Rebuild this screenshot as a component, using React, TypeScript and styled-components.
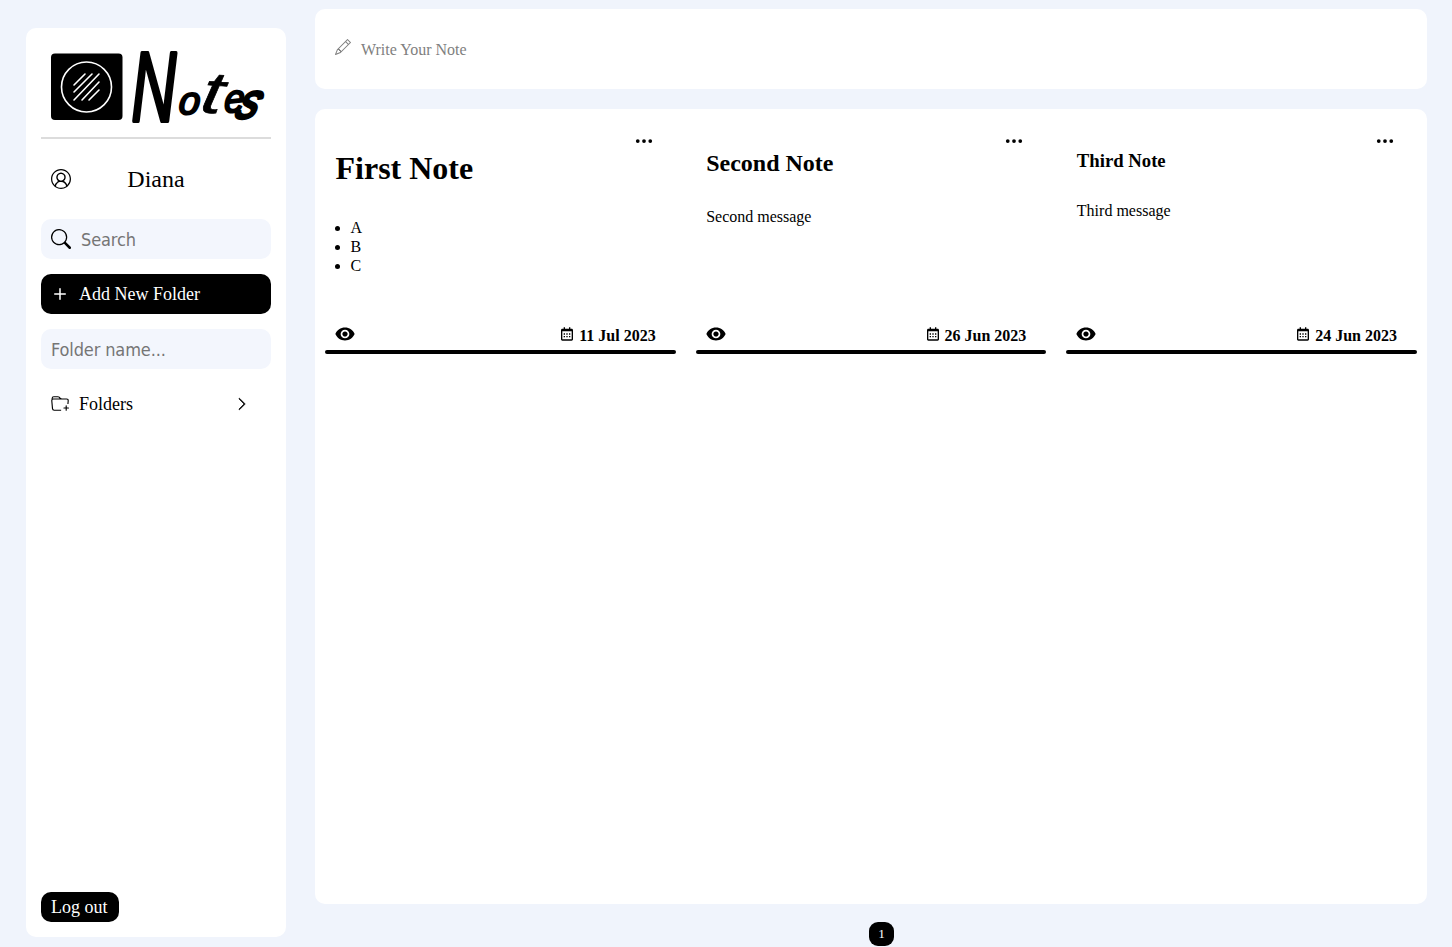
import React from 'react';
import styled, { createGlobalStyle } from 'styled-components';
import { BsSearch, BsPlus, BsFolderPlus, BsChevronRight, BsPencil, BsThreeDots } from 'react-icons/bs';
import { VscAccount } from 'react-icons/vsc';
import { IoMdEye } from 'react-icons/io';
import { BiCalendar } from 'react-icons/bi';

const GlobalStyle = createGlobalStyle`
  * { box-sizing: border-box; }
  body {
    margin: 0;
    background: #f0f4fc;
    color: #000;
    font-family: 'Liberation Serif', serif;
    font-size: 16px;
  }
  svg { flex: none; }
`;

const Page = styled.div`
  display: flex;
  gap: 29px;
  height: 947px;
  padding: 0 25px 0 26px;
  overflow: hidden;
`;

const Sidebar = styled.aside`
  display: flex;
  flex-direction: column;
  gap: 15px;
  width: 260px;
  height: 909px;
  margin-top: 28px;
  padding: 0 15px 15px;
  border-radius: 10px;
  background: #fff;
`;

const LogoBox = styled.div`
  height: 111px;
  padding: 20px 0 0 6px;
  border-bottom: 2px solid #dcdcdc;
  svg { overflow: visible; }
`;

const User = styled.div`
  display: flex;
  align-items: center;
  height: 50px;
  padding: 0 10px;
  font-size: 24px;
`;

const UserName = styled.span`
  flex: 1;
  padding-right: 20px;
  text-align: center;
`;

const Field = styled.label`
  display: flex;
  align-items: center;
  gap: 10px;
  height: 40px;
  padding: 0 10px;
  border-radius: 10px;
  background: #f3f6fd;
`;

const Input = styled.input`
  flex: 1;
  min-width: 0;
  padding: 0;
  border: 0;
  outline: 0;
  background: transparent;
  font: 18px 'DejaVu Sans Condensed', 'Noto Sans', sans-serif;
  letter-spacing: -0.13px;
  &::placeholder { color: #757575; opacity: 1; }
`;

const MenuButton = styled.button<{ $dark?: boolean }>`
  display: flex;
  align-items: center;
  gap: 10px;
  height: 40px;
  padding: 0 ${p => (p.$dark ? 10 : 22)}px 0 10px;
  border: 0;
  border-radius: 10px;
  background: ${p => (p.$dark ? '#000' : 'transparent')};
  color: ${p => (p.$dark ? '#fff' : '#000')};
  font: 18px 'Liberation Serif', serif;
`;

const PlusIcon = styled(BsPlus)`
  margin: 0 -3px;
`;

const Chevron = styled(BsChevronRight)`
  stroke: currentColor;
  stroke-width: 0.8;
`;

const MenuLabel = styled.span`
  flex: 1;
  text-align: left;
`;

const Logout = styled.button`
  align-self: flex-start;
  width: 78px;
  height: 30px;
  margin-top: auto;
  padding: 0 0 0 10px;
  border: 0;
  border-radius: 10px;
  background: #000;
  color: #fff;
  font: 18px 'Liberation Serif', serif;
  text-align: left;
`;

const Main = styled.main`
  display: flex;
  flex: 1;
  flex-direction: column;
  padding-top: 9px;
`;

const Composer = styled.div`
  display: flex;
  gap: 10px;
  height: 80px;
  padding: 30px 20px 0;
  border-radius: 10px;
  background: #fff;
  color: #808080;
  line-height: 22px;
`;

const Notes = styled.section`
  display: grid;
  grid-template-columns: repeat(3, 1fr);
  align-items: start;
  gap: 20px;
  height: 795px;
  margin-top: 20px;
  padding: 10px;
  border-radius: 10px;
  background: #fff;
`;

const Card = styled.article`
  display: flex;
  flex-direction: column;
  height: 235px;
`;

const CardBody = styled.div`
  display: flex;
  flex: 1;
  flex-direction: column;
  padding: 12px 20px 0 10.5px;
`;

const CardBar = styled.div`
  height: 4px;
  border-radius: 2px;
  background: #000;
`;

const More = styled.div`
  display: flex;
  justify-content: flex-end;
  height: 16px;
  padding-right: 2px;
`;

const CardTitle = styled.h2<{ $size: number; $line: number }>`
  margin: 3px 0 0;
  font-size: ${p => p.$size}px;
  line-height: ${p => p.$line}px;
`;

const CardText = styled.p`
  margin: 30px 0 0;
  line-height: 19px;
`;

const CardList = styled.ul`
  margin: 31px 0 0;
  padding-left: 15px;
  line-height: 19px;
`;

const CardFooter = styled.footer`
  display: flex;
  align-items: center;
  justify-content: space-between;
  height: 20px;
  margin: auto 0 4px;
  font-weight: bold;
`;

const EyeSlot = styled.span`
  display: flex;
  margin: -4px 0 0 -1.5px;
`;

const DateBox = styled.span`
  display: flex;
  align-items: center;
  gap: 4px;
  svg { margin-top: -4px; }
`;

const Pager = styled.nav`
  display: flex;
  justify-content: center;
  padding: 18px 0 0 21px;
`;

const PageButton = styled.button`
  width: 25px;
  height: 24px;
  padding: 0;
  border: 0;
  border-radius: 9px;
  background: #000;
  color: #fff;
  font: 13.3px 'Liberation Serif', serif;
`;

const WordMark = styled.g`
  font-family: 'Liberation Sans', sans-serif;
  font-style: italic;
  fill: #000;
  stroke: #000;
  stroke-linejoin: round;
`;

const marks = [
  { letter: 'N', place: 'translate(84.5 73) scale(.62 .98)', size: 100, weight: 4 },
  { letter: 'o', place: 'translate(131 65.5) skewX(-6) scale(.84 .86)', size: 45, weight: 2.6 },
  { letter: 't', place: 'translate(152 64) rotate(4) skewX(-6) scale(1.4 1.08)', size: 55, weight: 0.6 },
  { letter: 'e', place: 'translate(177 65) rotate(-6) skewX(-8) scale(.8 .84)', size: 46, weight: 2.6 },
  { letter: 's', place: 'translate(187 70) skewX(-22) scale(.84 .98)', size: 50, weight: 3.4 },
];

const Logo = () => (
  <svg width="216" height="80" viewBox="0 0 216 80" aria-label="Notes">
    <rect x="4" y="5.5" width="71.5" height="66.5" rx="4" />
    <g fill="none" stroke="#fff" strokeWidth="1.6" strokeLinecap="round">
      <circle cx="39.5" cy="39" r="25" />
      <path d="M27 37 38 26M27 44 45 26M27 52 52 26M35 52 52 34M42 52 52 42" />
    </g>
    <WordMark>
      {marks.map(m => (
        <text key={m.letter} transform={m.place} fontSize={m.size} strokeWidth={m.weight}>{m.letter}</text>
      ))}
    </WordMark>
  </svg>
);

type Note = { date: string; title: React.ReactNode; body: React.ReactNode };

const notes: Note[] = [
  {
    date: '11 Jul 2023',
    title: <CardTitle as="h1" $size={32} $line={37}>First Note</CardTitle>,
    body: <CardList><li>A</li><li>B</li><li>C</li></CardList>,
  },
  {
    date: '26 Jun 2023',
    title: <CardTitle $size={24} $line={27}>Second Note</CardTitle>,
    body: <CardText>Second message</CardText>,
  },
  {
    date: '24 Jun 2023',
    title: <CardTitle as="h3" $size={18.72} $line={21}>Third Note</CardTitle>,
    body: <CardText>Third message</CardText>,
  },
];

export default function App() {
  return (
    <>
      <GlobalStyle />
      <Page>
        <Sidebar>
          <LogoBox><Logo /></LogoBox>
          <User><VscAccount size={20} /><UserName>Diana</UserName></User>
          <Field><BsSearch size={20} /><Input placeholder="Search" /></Field>
          <MenuButton $dark><PlusIcon size={24} /><MenuLabel>Add New Folder</MenuLabel></MenuButton>
          <Field><Input placeholder="Folder name..." /></Field>
          <MenuButton><BsFolderPlus size={18} /><MenuLabel>Folders</MenuLabel><Chevron size={14} /></MenuButton>
          <Logout>Log out</Logout>
        </Sidebar>
        <Main>
          <Composer><BsPencil size={16} /><span>Write Your Note</span></Composer>
          <Notes>
            {notes.map(n => (
              <Card key={n.date}>
                <CardBody>
                  <More><BsThreeDots size={20} /></More>
                  {n.title}
                  {n.body}
                  <CardFooter>
                    <EyeSlot><IoMdEye size={22} /></EyeSlot>
                    <DateBox><BiCalendar size={16} />{n.date}</DateBox>
                  </CardFooter>
                </CardBody>
                <CardBar />
              </Card>
            ))}
          </Notes>
          <Pager><PageButton>1</PageButton></Pager>
        </Main>
      </Page>
    </>
  );
}
